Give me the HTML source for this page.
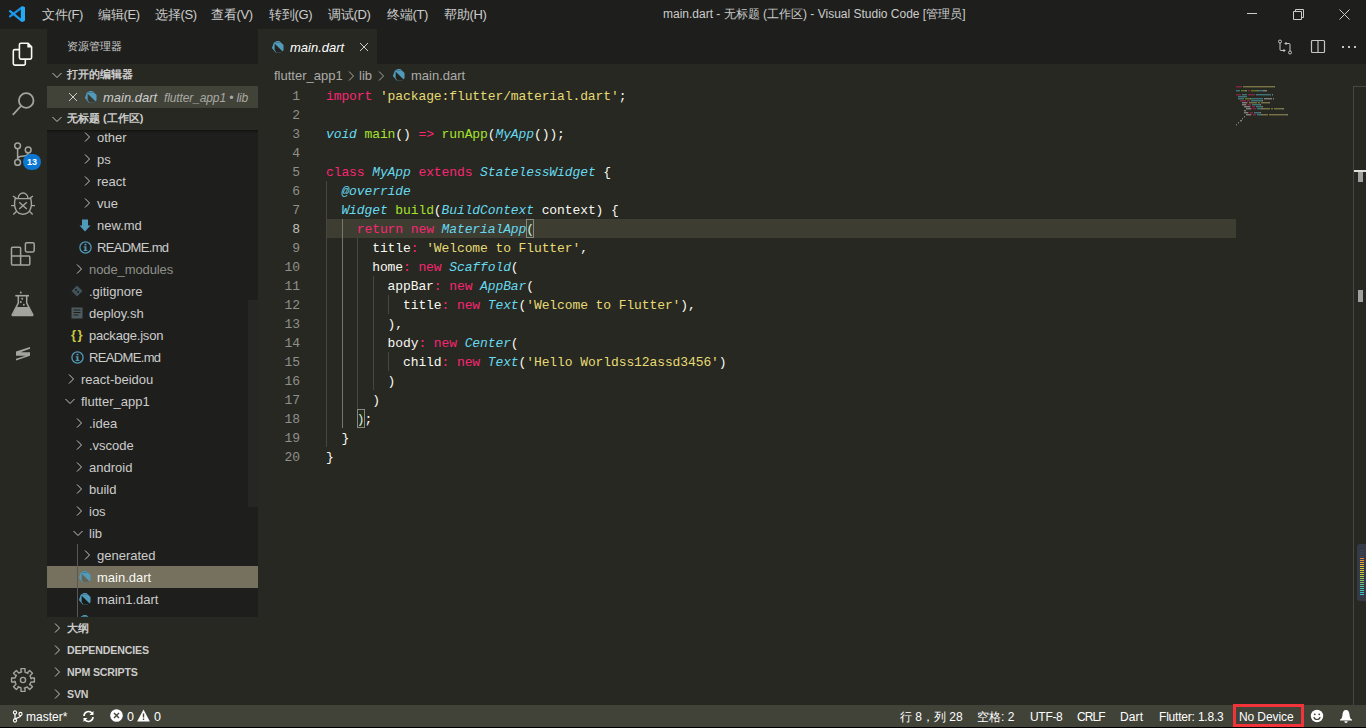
<!DOCTYPE html><html><head><meta charset="utf-8"><style>
*{margin:0;padding:0;box-sizing:border-box}
html,body{width:1366px;height:728px;overflow:hidden;background:#1e1f1c;font-family:"Liberation Sans",sans-serif;color:#cccccc}
.a{position:absolute;white-space:nowrap}
.t{position:absolute;white-space:nowrap;line-height:1}
.code{font-family:"Liberation Mono",monospace;font-size:13px;letter-spacing:-0.1px}
.kw{color:#f92672}.st{color:#e6db74}.fn{color:#a6e22e}.cl{color:#66d9ef;font-style:italic}.df{color:#f8f8f2}
</style></head><body><div class="a" style="left:0;top:0;width:1366px;height:29px;background:#1e1f1c"></div>
<svg class="a" style="left:8px;top:5px" width="19" height="19" viewBox="0 0 19 19">
<path d="M14 2.3 L2 11.3" stroke="#1b8fdd" stroke-width="2.3" stroke-linecap="round"/>
<path d="M14 15.8 L2 6.2" stroke="#1f9cf0" stroke-width="2.3" stroke-linecap="round"/>
<path d="M12.8 2.4 L15 1.3 L17 2.3 V15.8 L15 16.8 L12.8 15.7 Z" fill="#25a9f2"/>
</svg>
<div class="t" style="left:42px;top:8px;font-size:13px;letter-spacing:-0.3px;color:#cccccc">文件(F)</div>
<div class="t" style="left:98px;top:8px;font-size:13px;letter-spacing:-0.3px;color:#cccccc">编辑(E)</div>
<div class="t" style="left:155px;top:8px;font-size:13px;letter-spacing:-0.3px;color:#cccccc">选择(S)</div>
<div class="t" style="left:211px;top:8px;font-size:13px;letter-spacing:-0.3px;color:#cccccc">查看(V)</div>
<div class="t" style="left:269px;top:8px;font-size:13px;letter-spacing:-0.3px;color:#cccccc">转到(G)</div>
<div class="t" style="left:328px;top:8px;font-size:13px;letter-spacing:-0.3px;color:#cccccc">调试(D)</div>
<div class="t" style="left:387px;top:8px;font-size:13px;letter-spacing:-0.3px;color:#cccccc">终端(T)</div>
<div class="t" style="left:444px;top:8px;font-size:13px;letter-spacing:-0.3px;color:#cccccc">帮助(H)</div>
<div class="t" style="left:663px;top:8px;font-size:12px;color:#cccccc">main.dart - 无标题 (工作区) - Visual Studio Code [管理员]</div>
<div class="a" style="left:1247px;top:13px;width:10px;height:1px;background:#cccccc"></div>
<svg class="a" style="left:1293px;top:9px" width="11" height="11" viewBox="0 0 11 11"><path d="M0.5 2.5h8v8h-8z M2.5 2.5v-2h8v8h-2" fill="none" stroke="#cccccc" stroke-width="1"/></svg>
<svg class="a" style="left:1339px;top:9px" width="11" height="11" viewBox="0 0 11 11"><path d="M0.5 0.5L10.5 10.5M10.5 0.5L0.5 10.5" stroke="#cccccc" stroke-width="1"/></svg>
<div class="a" style="left:0;top:29px;width:47px;height:676px;background:#272822"></div>
<svg class="a" style="left:10px;top:40px" width="26" height="28" viewBox="0 0 26 28">
<path d="M9.4 9.6 H4.8 a1.5 1.5 0 0 0 -1.5 1.5 V23.6 a1.5 1.5 0 0 0 1.5 1.5 H13.8 a1.5 1.5 0 0 0 1.5 -1.5 V19.1" fill="none" stroke="#f8f8f2" stroke-width="1.6"/>
<path d="M10.9 3.3 H18.1 L21.6 6.8 V17.6 a1.5 1.5 0 0 1 -1.5 1.5 H10.9 a1.5 1.5 0 0 1 -1.5 -1.5 V4.8 a1.5 1.5 0 0 1 1.5 -1.5 Z M18.1 3.3 V6.8 H21.6" fill="none" stroke="#f8f8f2" stroke-width="1.6"/>
</svg>
<svg class="a" style="left:10px;top:89px" width="28" height="28" viewBox="0 0 28 28">
<circle cx="16.2" cy="11.5" r="7.3" fill="none" stroke="#a4a49f" stroke-width="1.8"/>
<path d="M11 17 L2.8 25.8" stroke="#a4a49f" stroke-width="1.8"/>
</svg>
<svg class="a" style="left:10px;top:140px" width="28" height="28" viewBox="0 0 28 28">
<circle cx="7.6" cy="5.8" r="2.9" fill="none" stroke="#a4a49f" stroke-width="1.5"/>
<circle cx="7.6" cy="22.4" r="2.9" fill="none" stroke="#a4a49f" stroke-width="1.5"/>
<circle cx="18.2" cy="9.9" r="2.9" fill="none" stroke="#a4a49f" stroke-width="1.5"/>
<path d="M7.6 8.7 V19.5 M18.2 12.8 C18.2 15.6 15.5 16.2 12 16.3 C9 16.4 7.6 17 7.6 19.5" fill="none" stroke="#a4a49f" stroke-width="1.5"/>
</svg>
<div class="a" style="left:23px;top:154px;width:18px;height:16px;border-radius:8px;background:#0a77d3;color:#fff;font-size:9px;font-weight:bold;text-align:center;line-height:16px">13</div>
<svg class="a" style="left:9px;top:190px" width="28" height="28" viewBox="0 0 28 28">
<path d="M9.1 8.6 A4.95 5.6 0 0 1 19 8.6" fill="none" stroke="#a4a49f" stroke-width="1.4"/>
<path d="M6.2 8.6 H21.8 C22.6 12 22.6 17 21 20 C19.5 23 17 24.2 14 24.2 C11 24.2 8.5 23 7 20 C5.4 17 5.4 12 6.2 8.6 Z" fill="none" stroke="#a4a49f" stroke-width="1.4"/>
<path d="M10.2 12.3 L17.8 19 M17.8 12.3 L10.2 19 M2 15.6 H6 M22 15.6 H26 M4 6 L7.4 8.4 M24 6 L20.6 8.4 M7.9 21 L4.3 24.6 M20.1 21 L23.7 24.6" stroke="#a4a49f" stroke-width="1.4"/>
</svg>
<svg class="a" style="left:9px;top:240px" width="28" height="28" viewBox="0 0 28 28">
<path d="M3.5 7.3 H10.6 a1 1 0 0 1 1 1 V16 H19.8 a1 1 0 0 1 1 1 V24.1 a1 1 0 0 1 -1 1 H3.5 a1 1 0 0 1 -1 -1 V8.3 a1 1 0 0 1 1 -1 Z M2.5 16 H11.6 V25.1" fill="none" stroke="#a4a49f" stroke-width="1.5"/>
<rect x="16.4" y="2.8" width="8.8" height="9.1" rx="1.3" fill="none" stroke="#a4a49f" stroke-width="1.5"/>
</svg>
<svg class="a" style="left:8px;top:288px" width="30" height="32" viewBox="0 0 30 32">
<path d="M7.3 7.7 H21" stroke="#a4a49f" stroke-width="1.6"/>
<path d="M10.3 7.7 V15 L4.3 26.5 Q3.9 27.6 5 27.6 H24 Q25.1 27.6 24.7 26.5 L18.7 15 V7.7" fill="none" stroke="#a4a49f" stroke-width="1.5"/>
<path d="M8.3 19 H20.7 L24.5 27.5 H4.5 Z" fill="#a4a49f"/>
<circle cx="12.8" cy="4.6" r="1" fill="#a4a49f"/><circle cx="14.2" cy="10.7" r="1" fill="#a4a49f"/><circle cx="12.8" cy="13.9" r="1" fill="#a4a49f"/><circle cx="15.8" cy="16.8" r="1" fill="#a4a49f"/>
</svg>
<svg class="a" style="left:10px;top:338px" width="28" height="28" viewBox="0 0 28 28">
<path d="M6 13.5 L20 9 V10.8 L10.5 14.3 H20 V17.8 L6 22.5 V20.7 L15.5 17.8 H6 Z" fill="#a4a49f"/>
</svg>
<svg class="a" style="left:9px;top:666px" width="28" height="28" viewBox="0 0 28 28">
<path d="M12.79 5.89 L12.02 6.04 L11.99 2.58 L16.01 2.58 L15.98 6.04 L18.88 7.41 L18.22 6.97 L20.65 4.50 L23.50 7.35 L21.03 9.78 L22.11 12.79 L21.96 12.02 L25.42 11.99 L25.42 16.01 L21.96 15.98 L20.59 18.88 L21.03 18.22 L23.50 20.65 L20.65 23.50 L18.22 21.03 L15.21 22.11 L15.98 21.96 L16.01 25.42 L11.99 25.42 L12.02 21.96 L9.12 20.59 L9.78 21.03 L7.35 23.50 L4.50 20.65 L6.97 18.22 L5.89 15.21 L6.04 15.98 L2.58 16.01 L2.58 11.99 L6.04 12.02 L7.41 9.12 L6.97 9.78 L4.50 7.35 L7.35 4.50 L9.78 6.97 Z" fill="none" stroke="#a4a49f" stroke-width="1.4" stroke-linejoin="round"/>
<circle cx="14" cy="14" r="2.6" fill="none" stroke="#a4a49f" stroke-width="1.4"/>
</svg>
<div class="a" style="left:47px;top:29px;width:211px;height:676px;background:#1e1f1c"></div>
<div class="t" style="left:67px;top:41px;font-size:11px;color:#cccccc">资源管理器</div>
<div class="a" style="left:47px;top:64px;width:211px;height:22px;background:#272822"></div>
<svg class="a" style="left:51px;top:69px" width="12" height="12" viewBox="0 0 12 12"><path d="M1.5 4 L6 8.5 L10.5 4" fill="none" stroke="#c5c5c5" stroke-width="1"/></svg>
<div class="t" style="left:67px;top:69px;font-size:11px;font-weight:bold;color:#cccccc">打开的编辑器</div>
<div class="a" style="left:47px;top:86px;width:211px;height:22px;background:#414339"></div>
<svg class="a" style="left:68px;top:92px" width="10" height="10" viewBox="0 0 10 10"><path d="M1 1L9 9M9 1L1 9" stroke="#cccccc" stroke-width="1"/></svg>
<svg class="a" style="left:84px;top:90px" width="13" height="13" viewBox="0 0 14 14">
<path d="M6 1 H9 L11 3 L13.5 5.5 V11 L10.5 13.5 H5 L1 8.5 L3 3 Z M4 4 L12.5 12.3 L10.3 13.3 H5.6 L3.9 10.5 Z" fill="#519aba" fill-rule="evenodd"/>
<path d="M4 4 L12.5 12.3 L10.3 13.3 H5.6 L3.9 10.5 Z" fill="#000" opacity="0.12"/>
<path d="M4.5 2.6 H10" stroke="#000" stroke-width="0.7" opacity="0.35"/>
</svg>
<div class="t" style="left:103px;top:91px;font-size:13px;font-style:italic;color:#cccccc">main.dart</div>
<div class="t" style="left:164px;top:92px;font-size:12px;letter-spacing:-0.12px;font-style:italic;color:#a9a9a4">flutter_app1 • lib</div>
<div class="a" style="left:47px;top:108px;width:211px;height:22px;background:#272822"></div>
<svg class="a" style="left:51px;top:113px" width="12" height="12" viewBox="0 0 12 12"><path d="M1.5 4 L6 8.5 L10.5 4" fill="none" stroke="#c5c5c5" stroke-width="1"/></svg>
<div class="t" style="left:67px;top:113px;font-size:11px;font-weight:bold;color:#cccccc">无标题 (工作区)</div>
<div class="a" style="left:47px;top:130px;width:211px;height:487px;overflow:hidden">
<svg class="a" style="left:34px;top:1px" width="12" height="12" viewBox="0 0 12 12"><path d="M4 1.5 L8.5 6 L4 10.5" fill="none" stroke="#c5c5c5" stroke-width="1"/></svg>
<div class="t" style="left:50px;top:1px;font-size:13px;letter-spacing:0px;color:#cccccc">other</div>
<svg class="a" style="left:34px;top:23px" width="12" height="12" viewBox="0 0 12 12"><path d="M4 1.5 L8.5 6 L4 10.5" fill="none" stroke="#c5c5c5" stroke-width="1"/></svg>
<div class="t" style="left:50px;top:23px;font-size:13px;letter-spacing:0px;color:#cccccc">ps</div>
<svg class="a" style="left:34px;top:45px" width="12" height="12" viewBox="0 0 12 12"><path d="M4 1.5 L8.5 6 L4 10.5" fill="none" stroke="#c5c5c5" stroke-width="1"/></svg>
<div class="t" style="left:50px;top:45px;font-size:13px;letter-spacing:0px;color:#cccccc">react</div>
<svg class="a" style="left:34px;top:67px" width="12" height="12" viewBox="0 0 12 12"><path d="M4 1.5 L8.5 6 L4 10.5" fill="none" stroke="#c5c5c5" stroke-width="1"/></svg>
<div class="t" style="left:50px;top:67px;font-size:13px;letter-spacing:0px;color:#cccccc">vue</div>
<svg class="a" style="left:32px;top:89px" width="12" height="13" viewBox="0 0 12 13"><path d="M3 0.5h6v6h2.5L6 12.5L0.5 6.5H3z" fill="#519aba"/></svg>
<div class="t" style="left:50px;top:89px;font-size:13px;letter-spacing:0px;color:#cccccc">new.md</div>
<svg class="a" style="left:32px;top:111px" width="13" height="13" viewBox="0 0 13 13"><circle cx="6.5" cy="6.5" r="5.6" fill="none" stroke="#519aba" stroke-width="1.3"/><rect x="5.6" y="5.3" width="1.8" height="4.6" fill="#519aba"/><rect x="5.6" y="2.8" width="1.8" height="1.6" fill="#519aba"/><rect x="4.6" y="5.3" width="1.2" height="1" fill="#519aba"/><rect x="4.6" y="8.9" width="3.8" height="1" fill="#519aba"/></svg>
<div class="t" style="left:50px;top:111px;font-size:13px;letter-spacing:-0.65px;color:#cccccc">README.md</div>
<svg class="a" style="left:26px;top:133px" width="12" height="12" viewBox="0 0 12 12"><path d="M4 1.5 L8.5 6 L4 10.5" fill="none" stroke="#c5c5c5" stroke-width="1"/></svg>
<div class="t" style="left:42px;top:133px;font-size:13px;letter-spacing:-0.1px;color:#8f908a">node_modules</div>
<svg class="a" style="left:24px;top:155px" width="12" height="12" viewBox="0 0 12 12"><path d="M6 0.5L11.5 6L6 11.5L0.5 6Z" fill="#41535b"/><circle cx="5" cy="5" r="1" fill="#1e1f1c"/><circle cx="7" cy="7" r="1" fill="#1e1f1c"/></svg>
<div class="t" style="left:42px;top:155px;font-size:13px;letter-spacing:0px;color:#cccccc">.gitignore</div>
<svg class="a" style="left:24px;top:177px" width="12" height="12" viewBox="0 0 12 12"><rect x="0.5" y="0.5" width="11" height="11" fill="#4d5a5e"/><path d="M2.5 3h7M2.5 5.5h7M2.5 8h5" stroke="#1e1f1c" stroke-width="1"/></svg>
<div class="t" style="left:42px;top:177px;font-size:13px;letter-spacing:0px;color:#cccccc">deploy.sh</div>
<div class="t" style="left:24px;top:198px;font-size:13px;font-weight:bold;letter-spacing:1.5px;color:#cbcb41">{}</div>
<div class="t" style="left:42px;top:199px;font-size:13px;letter-spacing:-0.2px;color:#cccccc">package.json</div>
<svg class="a" style="left:24px;top:221px" width="13" height="13" viewBox="0 0 13 13"><circle cx="6.5" cy="6.5" r="5.6" fill="none" stroke="#519aba" stroke-width="1.3"/><rect x="5.6" y="5.3" width="1.8" height="4.6" fill="#519aba"/><rect x="5.6" y="2.8" width="1.8" height="1.6" fill="#519aba"/><rect x="4.6" y="5.3" width="1.2" height="1" fill="#519aba"/><rect x="4.6" y="8.9" width="3.8" height="1" fill="#519aba"/></svg>
<div class="t" style="left:42px;top:221px;font-size:13px;letter-spacing:-0.65px;color:#cccccc">README.md</div>
<svg class="a" style="left:18px;top:243px" width="12" height="12" viewBox="0 0 12 12"><path d="M4 1.5 L8.5 6 L4 10.5" fill="none" stroke="#c5c5c5" stroke-width="1"/></svg>
<div class="t" style="left:34px;top:243px;font-size:13px;letter-spacing:0px;color:#cccccc">react-beidou</div>
<svg class="a" style="left:17px;top:265px" width="12" height="12" viewBox="0 0 12 12"><path d="M1.5 4 L6 8.5 L10.5 4" fill="none" stroke="#c5c5c5" stroke-width="1"/></svg>
<div class="t" style="left:34px;top:265px;font-size:13px;letter-spacing:0px;color:#cccccc">flutter_app1</div>
<svg class="a" style="left:26px;top:287px" width="12" height="12" viewBox="0 0 12 12"><path d="M4 1.5 L8.5 6 L4 10.5" fill="none" stroke="#c5c5c5" stroke-width="1"/></svg>
<div class="t" style="left:42px;top:287px;font-size:13px;letter-spacing:0px;color:#cccccc">.idea</div>
<svg class="a" style="left:26px;top:309px" width="12" height="12" viewBox="0 0 12 12"><path d="M4 1.5 L8.5 6 L4 10.5" fill="none" stroke="#c5c5c5" stroke-width="1"/></svg>
<div class="t" style="left:42px;top:309px;font-size:13px;letter-spacing:0px;color:#cccccc">.vscode</div>
<svg class="a" style="left:26px;top:331px" width="12" height="12" viewBox="0 0 12 12"><path d="M4 1.5 L8.5 6 L4 10.5" fill="none" stroke="#c5c5c5" stroke-width="1"/></svg>
<div class="t" style="left:42px;top:331px;font-size:13px;letter-spacing:0px;color:#cccccc">android</div>
<svg class="a" style="left:26px;top:353px" width="12" height="12" viewBox="0 0 12 12"><path d="M4 1.5 L8.5 6 L4 10.5" fill="none" stroke="#c5c5c5" stroke-width="1"/></svg>
<div class="t" style="left:42px;top:353px;font-size:13px;letter-spacing:0px;color:#cccccc">build</div>
<svg class="a" style="left:26px;top:375px" width="12" height="12" viewBox="0 0 12 12"><path d="M4 1.5 L8.5 6 L4 10.5" fill="none" stroke="#c5c5c5" stroke-width="1"/></svg>
<div class="t" style="left:42px;top:375px;font-size:13px;letter-spacing:0px;color:#cccccc">ios</div>
<svg class="a" style="left:25px;top:397px" width="12" height="12" viewBox="0 0 12 12"><path d="M1.5 4 L6 8.5 L10.5 4" fill="none" stroke="#c5c5c5" stroke-width="1"/></svg>
<div class="t" style="left:42px;top:397px;font-size:13px;letter-spacing:0px;color:#cccccc">lib</div>
<svg class="a" style="left:34px;top:419px" width="12" height="12" viewBox="0 0 12 12"><path d="M4 1.5 L8.5 6 L4 10.5" fill="none" stroke="#c5c5c5" stroke-width="1"/></svg>
<div class="t" style="left:50px;top:419px;font-size:13px;letter-spacing:0px;color:#cccccc">generated</div>
<div class="a" style="left:0;top:436px;width:211px;height:22px;background:#75715e"></div>
<svg class="a" style="left:31px;top:440px" width="13" height="13" viewBox="0 0 14 14">
<path d="M6 1 H9 L11 3 L13.5 5.5 V11 L10.5 13.5 H5 L1 8.5 L3 3 Z M4 4 L12.5 12.3 L10.3 13.3 H5.6 L3.9 10.5 Z" fill="#519aba" fill-rule="evenodd"/>
<path d="M4 4 L12.5 12.3 L10.3 13.3 H5.6 L3.9 10.5 Z" fill="#000" opacity="0.12"/>
<path d="M4.5 2.6 H10" stroke="#000" stroke-width="0.7" opacity="0.35"/>
</svg>
<div class="t" style="left:50px;top:441px;font-size:13px;letter-spacing:0px;color:#f8f8f2">main.dart</div>
<svg class="a" style="left:31px;top:462px" width="13" height="13" viewBox="0 0 14 14">
<path d="M6 1 H9 L11 3 L13.5 5.5 V11 L10.5 13.5 H5 L1 8.5 L3 3 Z M4 4 L12.5 12.3 L10.3 13.3 H5.6 L3.9 10.5 Z" fill="#519aba" fill-rule="evenodd"/>
<path d="M4 4 L12.5 12.3 L10.3 13.3 H5.6 L3.9 10.5 Z" fill="#000" opacity="0.12"/>
<path d="M4.5 2.6 H10" stroke="#000" stroke-width="0.7" opacity="0.35"/>
</svg>
<div class="t" style="left:50px;top:463px;font-size:13px;letter-spacing:0px;color:#cccccc">main1.dart</div>
<svg class="a" style="left:31px;top:484px" width="13" height="13" viewBox="0 0 14 14">
<path d="M6 1 H9 L11 3 L13.5 5.5 V11 L10.5 13.5 H5 L1 8.5 L3 3 Z M4 4 L12.5 12.3 L10.3 13.3 H5.6 L3.9 10.5 Z" fill="#519aba" fill-rule="evenodd"/>
<path d="M4 4 L12.5 12.3 L10.3 13.3 H5.6 L3.9 10.5 Z" fill="#000" opacity="0.12"/>
<path d="M4.5 2.6 H10" stroke="#000" stroke-width="0.7" opacity="0.35"/>
</svg>
<div class="t" style="left:50px;top:485px;font-size:13px;letter-spacing:0px;color:#cccccc">main2.dart</div>
<div class="a" style="left:0;top:0;width:211px;height:4px;background:linear-gradient(rgba(0,0,0,0.45),rgba(0,0,0,0.12) 50%,rgba(0,0,0,0))"></div>
<div class="a" style="left:30px;top:414px;width:1px;height:80px;background:#585858"></div>
<div class="a" style="left:201px;top:170px;width:10px;height:207px;background:rgba(121,121,121,0.10)"></div>
</div>
<div class="a" style="left:47px;top:617px;width:211px;height:22px;background:#272822"></div>
<svg class="a" style="left:51px;top:622px" width="12" height="12" viewBox="0 0 12 12"><path d="M4 1.5 L8.5 6 L4 10.5" fill="none" stroke="#c5c5c5" stroke-width="1"/></svg>
<div class="t" style="left:67px;top:623px;font-size:10.6px;letter-spacing:-0.15px;font-weight:bold;color:#cccccc">大纲</div>
<div class="a" style="left:47px;top:639px;width:211px;height:22px;background:#272822"></div>
<svg class="a" style="left:51px;top:644px" width="12" height="12" viewBox="0 0 12 12"><path d="M4 1.5 L8.5 6 L4 10.5" fill="none" stroke="#c5c5c5" stroke-width="1"/></svg>
<div class="t" style="left:67px;top:645px;font-size:10.6px;letter-spacing:-0.15px;font-weight:bold;color:#cccccc">DEPENDENCIES</div>
<div class="a" style="left:47px;top:661px;width:211px;height:22px;background:#272822"></div>
<svg class="a" style="left:51px;top:666px" width="12" height="12" viewBox="0 0 12 12"><path d="M4 1.5 L8.5 6 L4 10.5" fill="none" stroke="#c5c5c5" stroke-width="1"/></svg>
<div class="t" style="left:67px;top:667px;font-size:10.6px;letter-spacing:-0.15px;font-weight:bold;color:#cccccc">NPM SCRIPTS</div>
<div class="a" style="left:47px;top:683px;width:211px;height:22px;background:#272822"></div>
<svg class="a" style="left:51px;top:688px" width="12" height="12" viewBox="0 0 12 12"><path d="M4 1.5 L8.5 6 L4 10.5" fill="none" stroke="#c5c5c5" stroke-width="1"/></svg>
<div class="t" style="left:67px;top:689px;font-size:10.6px;letter-spacing:-0.15px;font-weight:bold;color:#cccccc">SVN</div>
<div class="a" style="left:258px;top:29px;width:1108px;height:35px;background:#1e1f1c"></div>
<div class="a" style="left:258px;top:29px;width:119px;height:35px;background:#272822"></div>
<svg class="a" style="left:271px;top:40px" width="13" height="13" viewBox="0 0 14 14">
<path d="M6 1 H9 L11 3 L13.5 5.5 V11 L10.5 13.5 H5 L1 8.5 L3 3 Z M4 4 L12.5 12.3 L10.3 13.3 H5.6 L3.9 10.5 Z" fill="#519aba" fill-rule="evenodd"/>
<path d="M4 4 L12.5 12.3 L10.3 13.3 H5.6 L3.9 10.5 Z" fill="#000" opacity="0.12"/>
<path d="M4.5 2.6 H10" stroke="#000" stroke-width="0.7" opacity="0.35"/>
</svg>
<div class="t" style="left:290px;top:41px;font-size:13px;font-style:italic;color:#ffffff">main.dart</div>
<svg class="a" style="left:359px;top:42px" width="10" height="10" viewBox="0 0 10 10"><path d="M1 1L9 9M9 1L1 9" stroke="#cccccc" stroke-width="1"/></svg>
<svg class="a" style="left:1277px;top:39px" width="16" height="16" viewBox="0 0 16 16">
<circle cx="3" cy="2.5" r="1.5" fill="none" stroke="#c5c5c5" stroke-width="1"/><circle cx="13" cy="13.5" r="1.5" fill="none" stroke="#c5c5c5" stroke-width="1"/>
<path d="M3 4v6.5a1 1 0 0 0 1 1h4 M6.5 10l1.5 1.5l-1.5 1.5 M13 12v-6.5a1 1 0 0 0 -1 -1h-4 M9.5 3l-1.5 1.5l1.5 1.5" fill="none" stroke="#c5c5c5" stroke-width="1"/>
</svg>
<svg class="a" style="left:1310px;top:39px" width="16" height="16" viewBox="0 0 16 16"><rect x="1.5" y="1.5" width="13" height="12" rx="1" fill="none" stroke="#c5c5c5" stroke-width="1.2"/><path d="M8 1.5v12" stroke="#c5c5c5" stroke-width="1.2"/></svg>
<svg class="a" style="left:1341px;top:45px" width="16" height="4" viewBox="0 0 16 4"><rect x="1" y="1" width="2" height="2" fill="#c5c5c5"/><rect x="7" y="1" width="2" height="2" fill="#c5c5c5"/><rect x="13" y="1" width="2" height="2" fill="#c5c5c5"/></svg>
<div class="a" style="left:258px;top:64px;width:1108px;height:641px;background:#272822"></div>
<div class="t" style="left:274px;top:69px;font-size:13px;color:#ababa8">flutter_app1</div>
<svg class="a" style="left:345px;top:70px" width="12" height="12" viewBox="0 0 12 12"><path d="M4 1.5 L8.5 6 L4 10.5" fill="none" stroke="#a9a9a4" stroke-width="1"/></svg>
<div class="t" style="left:359px;top:69px;font-size:13px;color:#ababa8">lib</div>
<svg class="a" style="left:375px;top:70px" width="12" height="12" viewBox="0 0 12 12"><path d="M4 1.5 L8.5 6 L4 10.5" fill="none" stroke="#a9a9a4" stroke-width="1"/></svg>
<svg class="a" style="left:392px;top:68px" width="13" height="13" viewBox="0 0 14 14">
<path d="M6 1 H9 L11 3 L13.5 5.5 V11 L10.5 13.5 H5 L1 8.5 L3 3 Z M4 4 L12.5 12.3 L10.3 13.3 H5.6 L3.9 10.5 Z" fill="#519aba" fill-rule="evenodd"/>
<path d="M4 4 L12.5 12.3 L10.3 13.3 H5.6 L3.9 10.5 Z" fill="#000" opacity="0.12"/>
<path d="M4.5 2.6 H10" stroke="#000" stroke-width="0.7" opacity="0.35"/>
</svg>
<div class="t" style="left:411px;top:69px;font-size:13px;color:#ababa8">main.dart</div>
<div class="a" style="left:327px;top:219px;width:909px;height:19px;background:#3e3d32"></div>
<div class="a" style="left:326px;top:181px;width:1px;height:266px;background:#464741"></div>
<div class="a" style="left:342px;top:219px;width:1px;height:209px;background:#767771"></div>
<div class="a" style="left:357px;top:238px;width:1px;height:171px;background:#464741"></div>
<div class="a" style="left:373px;top:276px;width:1px;height:114px;background:#464741"></div>
<div class="a" style="left:388px;top:295px;width:1px;height:19px;background:#464741"></div>
<div class="a" style="left:388px;top:352px;width:1px;height:19px;background:#464741"></div>
<div class="t code" style="left:260px;width:40px;text-align:right;top:90px;color:#90908a">1</div>
<div class="t code" style="left:260px;width:40px;text-align:right;top:109px;color:#90908a">2</div>
<div class="t code" style="left:260px;width:40px;text-align:right;top:128px;color:#90908a">3</div>
<div class="t code" style="left:260px;width:40px;text-align:right;top:147px;color:#90908a">4</div>
<div class="t code" style="left:260px;width:40px;text-align:right;top:166px;color:#90908a">5</div>
<div class="t code" style="left:260px;width:40px;text-align:right;top:185px;color:#90908a">6</div>
<div class="t code" style="left:260px;width:40px;text-align:right;top:204px;color:#90908a">7</div>
<div class="t code" style="left:260px;width:40px;text-align:right;top:223px;color:#c2c2bf">8</div>
<div class="t code" style="left:260px;width:40px;text-align:right;top:242px;color:#90908a">9</div>
<div class="t code" style="left:260px;width:40px;text-align:right;top:261px;color:#90908a">10</div>
<div class="t code" style="left:260px;width:40px;text-align:right;top:280px;color:#90908a">11</div>
<div class="t code" style="left:260px;width:40px;text-align:right;top:299px;color:#90908a">12</div>
<div class="t code" style="left:260px;width:40px;text-align:right;top:318px;color:#90908a">13</div>
<div class="t code" style="left:260px;width:40px;text-align:right;top:337px;color:#90908a">14</div>
<div class="t code" style="left:260px;width:40px;text-align:right;top:356px;color:#90908a">15</div>
<div class="t code" style="left:260px;width:40px;text-align:right;top:375px;color:#90908a">16</div>
<div class="t code" style="left:260px;width:40px;text-align:right;top:394px;color:#90908a">17</div>
<div class="t code" style="left:260px;width:40px;text-align:right;top:413px;color:#90908a">18</div>
<div class="t code" style="left:260px;width:40px;text-align:right;top:432px;color:#90908a">19</div>
<div class="t code" style="left:260px;width:40px;text-align:right;top:451px;color:#90908a">20</div>
<div class="t code df" style="left:326px;top:90px;white-space:pre"><span class="kw">import</span><span class="df"> </span><span class="st">&#x27;package:flutter/material.dart&#x27;</span><span class="df">;</span></div>
<div class="t code df" style="left:326px;top:109px;white-space:pre"></div>
<div class="t code df" style="left:326px;top:128px;white-space:pre"><span class="cl">void</span><span class="df"> </span><span class="fn">main</span><span class="df">() </span><span class="kw">=&gt;</span><span class="df"> </span><span class="fn">runApp</span><span class="df">(</span><span class="cl">MyApp</span><span class="df">());</span></div>
<div class="t code df" style="left:326px;top:147px;white-space:pre"></div>
<div class="t code df" style="left:326px;top:166px;white-space:pre"><span class="kw">class</span><span class="df"> </span><span class="cl">MyApp</span><span class="df"> </span><span class="kw">extends</span><span class="df"> </span><span class="cl">StatelessWidget</span><span class="df"> {</span></div>
<div class="t code df" style="left:326px;top:185px;white-space:pre"><span class="df">  </span><span class="cl">@override</span></div>
<div class="t code df" style="left:326px;top:204px;white-space:pre"><span class="df">  </span><span class="cl">Widget</span><span class="df"> </span><span class="fn">build</span><span class="df">(</span><span class="cl">BuildContext</span><span class="df"> context) {</span></div>
<div class="t code df" style="left:326px;top:223px;white-space:pre"><span class="df">    </span><span class="kw">return</span><span class="df"> </span><span class="kw">new</span><span class="df"> </span><span class="cl">MaterialApp</span><span class="df">(</span></div>
<div class="t code df" style="left:326px;top:242px;white-space:pre"><span class="df">      title</span><span class="kw">:</span><span class="df"> </span><span class="st">&#x27;Welcome to Flutter&#x27;</span><span class="df">,</span></div>
<div class="t code df" style="left:326px;top:261px;white-space:pre"><span class="df">      home</span><span class="kw">:</span><span class="df"> </span><span class="kw">new</span><span class="df"> </span><span class="cl">Scaffold</span><span class="df">(</span></div>
<div class="t code df" style="left:326px;top:280px;white-space:pre"><span class="df">        appBar</span><span class="kw">:</span><span class="df"> </span><span class="kw">new</span><span class="df"> </span><span class="cl">AppBar</span><span class="df">(</span></div>
<div class="t code df" style="left:326px;top:299px;white-space:pre"><span class="df">          title</span><span class="kw">:</span><span class="df"> </span><span class="kw">new</span><span class="df"> </span><span class="cl">Text</span><span class="df">(</span><span class="st">&#x27;Welcome to Flutter&#x27;</span><span class="df">),</span></div>
<div class="t code df" style="left:326px;top:318px;white-space:pre"><span class="df">        ),</span></div>
<div class="t code df" style="left:326px;top:337px;white-space:pre"><span class="df">        body</span><span class="kw">:</span><span class="df"> </span><span class="kw">new</span><span class="df"> </span><span class="cl">Center</span><span class="df">(</span></div>
<div class="t code df" style="left:326px;top:356px;white-space:pre"><span class="df">          child</span><span class="kw">:</span><span class="df"> </span><span class="kw">new</span><span class="df"> </span><span class="cl">Text</span><span class="df">(</span><span class="st">&#x27;Hello Worldss12assd3456&#x27;</span><span class="df">)</span></div>
<div class="t code df" style="left:326px;top:375px;white-space:pre"><span class="df">        )</span></div>
<div class="t code df" style="left:326px;top:394px;white-space:pre"><span class="df">      )</span></div>
<div class="t code df" style="left:326px;top:413px;white-space:pre"><span class="df">    );</span></div>
<div class="t code df" style="left:326px;top:432px;white-space:pre"><span class="df">  }</span></div>
<div class="t code df" style="left:326px;top:451px;white-space:pre"><span class="df">}</span></div>
<div class="a" style="left:526px;top:219px;width:8px;height:19px;border:1px solid #888888;background:rgba(0,100,0,0.1)"></div>
<div class="a" style="left:357px;top:409px;width:8px;height:19px;border:1px solid #888888;background:rgba(0,100,0,0.1)"></div>
<div class="a" style="left:1236px;top:86px;width:117px;height:42px"><div style="position:absolute;left:0px;top:0px;width:6px;height:1px;background:#f92672;opacity:0.42"></div><div style="position:absolute;left:0px;top:1px;width:6px;height:1px;background:#f92672;opacity:0.18"></div><div style="position:absolute;left:7px;top:0px;width:31px;height:1px;background:#e6db74;opacity:0.42"></div><div style="position:absolute;left:7px;top:1px;width:31px;height:1px;background:#e6db74;opacity:0.18"></div><div style="position:absolute;left:38px;top:0px;width:1px;height:1px;background:#f8f8f2;opacity:0.42"></div><div style="position:absolute;left:38px;top:1px;width:1px;height:1px;background:#f8f8f2;opacity:0.18"></div><div style="position:absolute;left:0px;top:4px;width:4px;height:1px;background:#66d9ef;opacity:0.42"></div><div style="position:absolute;left:0px;top:5px;width:4px;height:1px;background:#66d9ef;opacity:0.18"></div><div style="position:absolute;left:5px;top:4px;width:4px;height:1px;background:#a6e22e;opacity:0.42"></div><div style="position:absolute;left:5px;top:5px;width:4px;height:1px;background:#a6e22e;opacity:0.18"></div><div style="position:absolute;left:9px;top:4px;width:2px;height:1px;background:#f8f8f2;opacity:0.42"></div><div style="position:absolute;left:9px;top:5px;width:2px;height:1px;background:#f8f8f2;opacity:0.18"></div><div style="position:absolute;left:12px;top:4px;width:2px;height:1px;background:#f92672;opacity:0.42"></div><div style="position:absolute;left:12px;top:5px;width:2px;height:1px;background:#f92672;opacity:0.18"></div><div style="position:absolute;left:15px;top:4px;width:6px;height:1px;background:#a6e22e;opacity:0.42"></div><div style="position:absolute;left:15px;top:5px;width:6px;height:1px;background:#a6e22e;opacity:0.18"></div><div style="position:absolute;left:21px;top:4px;width:1px;height:1px;background:#f8f8f2;opacity:0.42"></div><div style="position:absolute;left:21px;top:5px;width:1px;height:1px;background:#f8f8f2;opacity:0.18"></div><div style="position:absolute;left:22px;top:4px;width:5px;height:1px;background:#66d9ef;opacity:0.42"></div><div style="position:absolute;left:22px;top:5px;width:5px;height:1px;background:#66d9ef;opacity:0.18"></div><div style="position:absolute;left:27px;top:4px;width:4px;height:1px;background:#f8f8f2;opacity:0.42"></div><div style="position:absolute;left:27px;top:5px;width:4px;height:1px;background:#f8f8f2;opacity:0.18"></div><div style="position:absolute;left:0px;top:8px;width:5px;height:1px;background:#f92672;opacity:0.42"></div><div style="position:absolute;left:0px;top:9px;width:5px;height:1px;background:#f92672;opacity:0.18"></div><div style="position:absolute;left:6px;top:8px;width:5px;height:1px;background:#66d9ef;opacity:0.42"></div><div style="position:absolute;left:6px;top:9px;width:5px;height:1px;background:#66d9ef;opacity:0.18"></div><div style="position:absolute;left:12px;top:8px;width:7px;height:1px;background:#f92672;opacity:0.42"></div><div style="position:absolute;left:12px;top:9px;width:7px;height:1px;background:#f92672;opacity:0.18"></div><div style="position:absolute;left:20px;top:8px;width:15px;height:1px;background:#66d9ef;opacity:0.42"></div><div style="position:absolute;left:20px;top:9px;width:15px;height:1px;background:#66d9ef;opacity:0.18"></div><div style="position:absolute;left:36px;top:8px;width:1px;height:1px;background:#f8f8f2;opacity:0.42"></div><div style="position:absolute;left:36px;top:9px;width:1px;height:1px;background:#f8f8f2;opacity:0.18"></div><div style="position:absolute;left:2px;top:10px;width:9px;height:1px;background:#66d9ef;opacity:0.42"></div><div style="position:absolute;left:2px;top:11px;width:9px;height:1px;background:#66d9ef;opacity:0.18"></div><div style="position:absolute;left:2px;top:12px;width:6px;height:1px;background:#66d9ef;opacity:0.42"></div><div style="position:absolute;left:2px;top:13px;width:6px;height:1px;background:#66d9ef;opacity:0.18"></div><div style="position:absolute;left:9px;top:12px;width:5px;height:1px;background:#a6e22e;opacity:0.42"></div><div style="position:absolute;left:9px;top:13px;width:5px;height:1px;background:#a6e22e;opacity:0.18"></div><div style="position:absolute;left:14px;top:12px;width:1px;height:1px;background:#f8f8f2;opacity:0.42"></div><div style="position:absolute;left:14px;top:13px;width:1px;height:1px;background:#f8f8f2;opacity:0.18"></div><div style="position:absolute;left:15px;top:12px;width:12px;height:1px;background:#66d9ef;opacity:0.42"></div><div style="position:absolute;left:15px;top:13px;width:12px;height:1px;background:#66d9ef;opacity:0.18"></div><div style="position:absolute;left:28px;top:12px;width:8px;height:1px;background:#f8f8f2;opacity:0.42"></div><div style="position:absolute;left:28px;top:13px;width:8px;height:1px;background:#f8f8f2;opacity:0.18"></div><div style="position:absolute;left:37px;top:12px;width:1px;height:1px;background:#f8f8f2;opacity:0.42"></div><div style="position:absolute;left:37px;top:13px;width:1px;height:1px;background:#f8f8f2;opacity:0.18"></div><div style="position:absolute;left:4px;top:14px;width:6px;height:1px;background:#f92672;opacity:0.42"></div><div style="position:absolute;left:4px;top:15px;width:6px;height:1px;background:#f92672;opacity:0.18"></div><div style="position:absolute;left:11px;top:14px;width:3px;height:1px;background:#f92672;opacity:0.42"></div><div style="position:absolute;left:11px;top:15px;width:3px;height:1px;background:#f92672;opacity:0.18"></div><div style="position:absolute;left:15px;top:14px;width:11px;height:1px;background:#66d9ef;opacity:0.42"></div><div style="position:absolute;left:15px;top:15px;width:11px;height:1px;background:#66d9ef;opacity:0.18"></div><div style="position:absolute;left:26px;top:14px;width:1px;height:1px;background:#f8f8f2;opacity:0.42"></div><div style="position:absolute;left:26px;top:15px;width:1px;height:1px;background:#f8f8f2;opacity:0.18"></div><div style="position:absolute;left:6px;top:16px;width:5px;height:1px;background:#f8f8f2;opacity:0.42"></div><div style="position:absolute;left:6px;top:17px;width:5px;height:1px;background:#f8f8f2;opacity:0.18"></div><div style="position:absolute;left:11px;top:16px;width:1px;height:1px;background:#f92672;opacity:0.42"></div><div style="position:absolute;left:11px;top:17px;width:1px;height:1px;background:#f92672;opacity:0.18"></div><div style="position:absolute;left:13px;top:16px;width:8px;height:1px;background:#e6db74;opacity:0.42"></div><div style="position:absolute;left:13px;top:17px;width:8px;height:1px;background:#e6db74;opacity:0.18"></div><div style="position:absolute;left:22px;top:16px;width:2px;height:1px;background:#e6db74;opacity:0.42"></div><div style="position:absolute;left:22px;top:17px;width:2px;height:1px;background:#e6db74;opacity:0.18"></div><div style="position:absolute;left:25px;top:16px;width:8px;height:1px;background:#e6db74;opacity:0.42"></div><div style="position:absolute;left:25px;top:17px;width:8px;height:1px;background:#e6db74;opacity:0.18"></div><div style="position:absolute;left:33px;top:16px;width:1px;height:1px;background:#f8f8f2;opacity:0.42"></div><div style="position:absolute;left:33px;top:17px;width:1px;height:1px;background:#f8f8f2;opacity:0.18"></div><div style="position:absolute;left:6px;top:18px;width:4px;height:1px;background:#f8f8f2;opacity:0.42"></div><div style="position:absolute;left:6px;top:19px;width:4px;height:1px;background:#f8f8f2;opacity:0.18"></div><div style="position:absolute;left:10px;top:18px;width:1px;height:1px;background:#f92672;opacity:0.42"></div><div style="position:absolute;left:10px;top:19px;width:1px;height:1px;background:#f92672;opacity:0.18"></div><div style="position:absolute;left:12px;top:18px;width:3px;height:1px;background:#f92672;opacity:0.42"></div><div style="position:absolute;left:12px;top:19px;width:3px;height:1px;background:#f92672;opacity:0.18"></div><div style="position:absolute;left:16px;top:18px;width:8px;height:1px;background:#66d9ef;opacity:0.42"></div><div style="position:absolute;left:16px;top:19px;width:8px;height:1px;background:#66d9ef;opacity:0.18"></div><div style="position:absolute;left:24px;top:18px;width:1px;height:1px;background:#f8f8f2;opacity:0.42"></div><div style="position:absolute;left:24px;top:19px;width:1px;height:1px;background:#f8f8f2;opacity:0.18"></div><div style="position:absolute;left:8px;top:20px;width:6px;height:1px;background:#f8f8f2;opacity:0.42"></div><div style="position:absolute;left:8px;top:21px;width:6px;height:1px;background:#f8f8f2;opacity:0.18"></div><div style="position:absolute;left:14px;top:20px;width:1px;height:1px;background:#f92672;opacity:0.42"></div><div style="position:absolute;left:14px;top:21px;width:1px;height:1px;background:#f92672;opacity:0.18"></div><div style="position:absolute;left:16px;top:20px;width:3px;height:1px;background:#f92672;opacity:0.42"></div><div style="position:absolute;left:16px;top:21px;width:3px;height:1px;background:#f92672;opacity:0.18"></div><div style="position:absolute;left:20px;top:20px;width:6px;height:1px;background:#66d9ef;opacity:0.42"></div><div style="position:absolute;left:20px;top:21px;width:6px;height:1px;background:#66d9ef;opacity:0.18"></div><div style="position:absolute;left:26px;top:20px;width:1px;height:1px;background:#f8f8f2;opacity:0.42"></div><div style="position:absolute;left:26px;top:21px;width:1px;height:1px;background:#f8f8f2;opacity:0.18"></div><div style="position:absolute;left:10px;top:22px;width:5px;height:1px;background:#f8f8f2;opacity:0.42"></div><div style="position:absolute;left:10px;top:23px;width:5px;height:1px;background:#f8f8f2;opacity:0.18"></div><div style="position:absolute;left:15px;top:22px;width:1px;height:1px;background:#f92672;opacity:0.42"></div><div style="position:absolute;left:15px;top:23px;width:1px;height:1px;background:#f92672;opacity:0.18"></div><div style="position:absolute;left:17px;top:22px;width:3px;height:1px;background:#f92672;opacity:0.42"></div><div style="position:absolute;left:17px;top:23px;width:3px;height:1px;background:#f92672;opacity:0.18"></div><div style="position:absolute;left:21px;top:22px;width:4px;height:1px;background:#66d9ef;opacity:0.42"></div><div style="position:absolute;left:21px;top:23px;width:4px;height:1px;background:#66d9ef;opacity:0.18"></div><div style="position:absolute;left:25px;top:22px;width:1px;height:1px;background:#f8f8f2;opacity:0.42"></div><div style="position:absolute;left:25px;top:23px;width:1px;height:1px;background:#f8f8f2;opacity:0.18"></div><div style="position:absolute;left:26px;top:22px;width:8px;height:1px;background:#e6db74;opacity:0.42"></div><div style="position:absolute;left:26px;top:23px;width:8px;height:1px;background:#e6db74;opacity:0.18"></div><div style="position:absolute;left:35px;top:22px;width:2px;height:1px;background:#e6db74;opacity:0.42"></div><div style="position:absolute;left:35px;top:23px;width:2px;height:1px;background:#e6db74;opacity:0.18"></div><div style="position:absolute;left:38px;top:22px;width:8px;height:1px;background:#e6db74;opacity:0.42"></div><div style="position:absolute;left:38px;top:23px;width:8px;height:1px;background:#e6db74;opacity:0.18"></div><div style="position:absolute;left:46px;top:22px;width:2px;height:1px;background:#f8f8f2;opacity:0.42"></div><div style="position:absolute;left:46px;top:23px;width:2px;height:1px;background:#f8f8f2;opacity:0.18"></div><div style="position:absolute;left:8px;top:24px;width:2px;height:1px;background:#f8f8f2;opacity:0.42"></div><div style="position:absolute;left:8px;top:25px;width:2px;height:1px;background:#f8f8f2;opacity:0.18"></div><div style="position:absolute;left:8px;top:26px;width:4px;height:1px;background:#f8f8f2;opacity:0.42"></div><div style="position:absolute;left:8px;top:27px;width:4px;height:1px;background:#f8f8f2;opacity:0.18"></div><div style="position:absolute;left:12px;top:26px;width:1px;height:1px;background:#f92672;opacity:0.42"></div><div style="position:absolute;left:12px;top:27px;width:1px;height:1px;background:#f92672;opacity:0.18"></div><div style="position:absolute;left:14px;top:26px;width:3px;height:1px;background:#f92672;opacity:0.42"></div><div style="position:absolute;left:14px;top:27px;width:3px;height:1px;background:#f92672;opacity:0.18"></div><div style="position:absolute;left:18px;top:26px;width:6px;height:1px;background:#66d9ef;opacity:0.42"></div><div style="position:absolute;left:18px;top:27px;width:6px;height:1px;background:#66d9ef;opacity:0.18"></div><div style="position:absolute;left:24px;top:26px;width:1px;height:1px;background:#f8f8f2;opacity:0.42"></div><div style="position:absolute;left:24px;top:27px;width:1px;height:1px;background:#f8f8f2;opacity:0.18"></div><div style="position:absolute;left:10px;top:28px;width:5px;height:1px;background:#f8f8f2;opacity:0.42"></div><div style="position:absolute;left:10px;top:29px;width:5px;height:1px;background:#f8f8f2;opacity:0.18"></div><div style="position:absolute;left:15px;top:28px;width:1px;height:1px;background:#f92672;opacity:0.42"></div><div style="position:absolute;left:15px;top:29px;width:1px;height:1px;background:#f92672;opacity:0.18"></div><div style="position:absolute;left:17px;top:28px;width:3px;height:1px;background:#f92672;opacity:0.42"></div><div style="position:absolute;left:17px;top:29px;width:3px;height:1px;background:#f92672;opacity:0.18"></div><div style="position:absolute;left:21px;top:28px;width:4px;height:1px;background:#66d9ef;opacity:0.42"></div><div style="position:absolute;left:21px;top:29px;width:4px;height:1px;background:#66d9ef;opacity:0.18"></div><div style="position:absolute;left:25px;top:28px;width:1px;height:1px;background:#f8f8f2;opacity:0.42"></div><div style="position:absolute;left:25px;top:29px;width:1px;height:1px;background:#f8f8f2;opacity:0.18"></div><div style="position:absolute;left:26px;top:28px;width:6px;height:1px;background:#e6db74;opacity:0.42"></div><div style="position:absolute;left:26px;top:29px;width:6px;height:1px;background:#e6db74;opacity:0.18"></div><div style="position:absolute;left:33px;top:28px;width:18px;height:1px;background:#e6db74;opacity:0.42"></div><div style="position:absolute;left:33px;top:29px;width:18px;height:1px;background:#e6db74;opacity:0.18"></div><div style="position:absolute;left:51px;top:28px;width:1px;height:1px;background:#f8f8f2;opacity:0.42"></div><div style="position:absolute;left:51px;top:29px;width:1px;height:1px;background:#f8f8f2;opacity:0.18"></div><div style="position:absolute;left:8px;top:30px;width:1px;height:1px;background:#f8f8f2;opacity:0.42"></div><div style="position:absolute;left:8px;top:31px;width:1px;height:1px;background:#f8f8f2;opacity:0.18"></div><div style="position:absolute;left:6px;top:32px;width:1px;height:1px;background:#f8f8f2;opacity:0.42"></div><div style="position:absolute;left:6px;top:33px;width:1px;height:1px;background:#f8f8f2;opacity:0.18"></div><div style="position:absolute;left:4px;top:34px;width:2px;height:1px;background:#f8f8f2;opacity:0.42"></div><div style="position:absolute;left:4px;top:35px;width:2px;height:1px;background:#f8f8f2;opacity:0.18"></div><div style="position:absolute;left:2px;top:36px;width:1px;height:1px;background:#f8f8f2;opacity:0.42"></div><div style="position:absolute;left:2px;top:37px;width:1px;height:1px;background:#f8f8f2;opacity:0.18"></div><div style="position:absolute;left:0px;top:38px;width:1px;height:1px;background:#f8f8f2;opacity:0.42"></div><div style="position:absolute;left:0px;top:39px;width:1px;height:1px;background:#f8f8f2;opacity:0.18"></div></div>
<div class="a" style="left:1353px;top:86px;width:1px;height:619px;background:#474842"></div>
<div class="a" style="left:1353px;top:86px;width:13px;height:1px;background:#474842"></div>
<div class="a" style="left:1354px;top:170px;width:12px;height:2px;background:#e0e0d8"></div>
<div class="a" style="left:1358px;top:172px;width:5px;height:10px;background:#a0a0a0"></div>
<div class="a" style="left:1358px;top:290px;width:5px;height:12px;background:#a0a0a0"></div>
<div class="a" style="left:1357px;top:544px;width:12px;height:57px;border-radius:3px;background:#353a46"><div style="position:absolute;left:3px;top:6px;width:4px;height:1px;background:#3b4452"></div><div style="position:absolute;left:3px;top:8px;width:4px;height:1px;background:#3b4452"></div><div style="position:absolute;left:3px;top:10px;width:4px;height:1px;background:#3b4452"></div><div style="position:absolute;left:3px;top:12px;width:4px;height:1px;background:#3b4452"></div><div style="position:absolute;left:3px;top:14px;width:4px;height:1px;background:#e0883a"></div><div style="position:absolute;left:3px;top:16px;width:4px;height:1px;background:#e4953a"></div><div style="position:absolute;left:3px;top:18px;width:4px;height:1px;background:#e6a23a"></div><div style="position:absolute;left:3px;top:20px;width:4px;height:1px;background:#e6b43a"></div><div style="position:absolute;left:3px;top:22px;width:4px;height:1px;background:#e6c23a"></div><div style="position:absolute;left:3px;top:24px;width:4px;height:1px;background:#e0c43a"></div><div style="position:absolute;left:3px;top:26px;width:4px;height:1px;background:#d8cb3a"></div><div style="position:absolute;left:3px;top:28px;width:4px;height:1px;background:#cccd3a"></div><div style="position:absolute;left:3px;top:30px;width:4px;height:1px;background:#bccd3a"></div><div style="position:absolute;left:3px;top:32px;width:4px;height:1px;background:#aacd48"></div><div style="position:absolute;left:3px;top:34px;width:4px;height:1px;background:#98cb58"></div><div style="position:absolute;left:3px;top:36px;width:4px;height:1px;background:#88c868"></div><div style="position:absolute;left:3px;top:38px;width:4px;height:1px;background:#78c678"></div><div style="position:absolute;left:3px;top:40px;width:4px;height:1px;background:#68c488"></div><div style="position:absolute;left:3px;top:42px;width:4px;height:1px;background:#58c498"></div><div style="position:absolute;left:3px;top:44px;width:4px;height:1px;background:#48c4a8"></div><div style="position:absolute;left:3px;top:46px;width:4px;height:1px;background:#40c4b8"></div><div style="position:absolute;left:3px;top:48px;width:4px;height:1px;background:#38c4c4"></div><div style="position:absolute;left:3px;top:50px;width:4px;height:1px;background:#34c4cc"></div></div>
<div class="a" style="left:0;top:705px;width:1366px;height:22px;background:#414339"></div>
<div class="a" style="left:0;top:727px;width:1366px;height:1px;background:#000000"></div>
<svg class="a" style="left:12px;top:710px" width="12" height="13" viewBox="0 0 12 13">
<circle cx="3" cy="2.5" r="1.6" fill="none" stroke="#ffffff" stroke-width="1.1"/><circle cx="3" cy="10.5" r="1.6" fill="none" stroke="#ffffff" stroke-width="1.1"/><circle cx="8.5" cy="4" r="1.6" fill="none" stroke="#ffffff" stroke-width="1.1"/>
<path d="M3 4v5 M8.5 5.6c0 2.5 -4.5 2 -5.2 3.5" fill="none" stroke="#ffffff" stroke-width="1.2"/></svg>
<div class="t" style="left:26px;top:711px;font-size:12px;color:#ffffff">master*</div>
<svg class="a" style="left:82px;top:710px" width="13" height="13" viewBox="0 0 13 13">
<path d="M2 6 a4.5 4.5 0 0 1 8.2 -2.5 M11 7 a4.5 4.5 0 0 1 -8.2 2.5" fill="none" stroke="#ffffff" stroke-width="1.6"/>
<path d="M11.5 1v4h-4z M1.5 12v-4h4z" fill="#ffffff"/></svg>
<svg class="a" style="left:110px;top:709px" width="13" height="13" viewBox="0 0 13 13"><circle cx="6.5" cy="6.5" r="6.3" fill="#ffffff"/><path d="M4 4l5 5M9 4l-5 5" stroke="#414339" stroke-width="1.4"/></svg>
<div class="t" style="left:127px;top:711px;font-size:12.5px;color:#ffffff">0</div>
<svg class="a" style="left:137px;top:709px" width="13" height="13" viewBox="0 0 13 13"><path d="M6.5 0.5L12.9 12.5H0.1Z" fill="#ffffff"/><path d="M6.5 4.5v4M6.5 9.5v1.5" stroke="#414339" stroke-width="1.4"/></svg>
<div class="t" style="left:154px;top:711px;font-size:12.5px;color:#ffffff">0</div>
<div class="t" style="left:900px;top:711px;font-size:12px;letter-spacing:0px;color:#ffffff">行 8，列 28</div>
<div class="t" style="left:977px;top:711px;font-size:12px;letter-spacing:0px;color:#ffffff">空格: 2</div>
<div class="t" style="left:1030px;top:711px;font-size:12px;letter-spacing:-0.3px;color:#ffffff">UTF-8</div>
<div class="t" style="left:1077px;top:711px;font-size:12px;letter-spacing:-0.9px;color:#ffffff">CRLF</div>
<div class="t" style="left:1120px;top:711px;font-size:12px;letter-spacing:0.1px;color:#ffffff">Dart</div>
<div class="t" style="left:1159px;top:711px;font-size:12px;letter-spacing:-0.2px;color:#ffffff">Flutter: 1.8.3</div>
<div class="t" style="left:1239px;top:711px;font-size:12px;letter-spacing:-0.1px;color:#ffffff">No Device</div>
<div class="a" style="left:1233px;top:704px;width:71px;height:23px;border:3px solid #f2343a"></div>
<svg class="a" style="left:1310px;top:709px" width="14" height="14" viewBox="0 0 14 14"><circle cx="7" cy="7" r="6.2" fill="#ffffff"/><circle cx="4.8" cy="5.3" r="0.9" fill="#414339"/><circle cx="9.2" cy="5.3" r="0.9" fill="#414339"/><path d="M3.8 8 a3.3 3.3 0 0 0 6.4 0" fill="none" stroke="#414339" stroke-width="1.1"/></svg>
<svg class="a" style="left:1339px;top:709px" width="14" height="14" viewBox="0 0 14 14"><path d="M7 1 C9.3 1 10.2 2.8 10.5 5.5 C10.8 8.5 11.3 9.9 13 10.6 V11.6 H1 V10.6 C2.7 9.9 3.2 8.5 3.5 5.5 C3.8 2.8 4.7 1 7 1 Z" fill="#ffffff"/><path d="M5.3 12.2 H8.7 A1.7 1.7 0 0 1 5.3 12.2 Z" fill="#ffffff"/></svg></body></html>
